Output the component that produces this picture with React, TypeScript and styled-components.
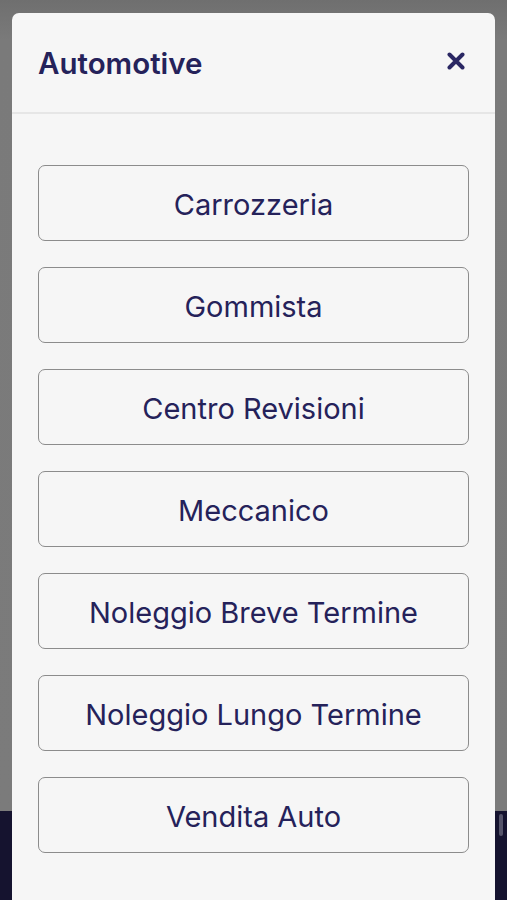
import styled, { createGlobalStyle } from "styled-components";

const GlobalStyle = createGlobalStyle`
  html, body {
    margin: 0;
    padding: 0;
    background: #7a7a7a;
  }
  * {
    box-sizing: border-box;
  }
`;

const categories = [
  "Carrozzeria",
  "Gommista",
  "Centro Revisioni",
  "Meccanico",
  "Noleggio Breve Termine",
  "Noleggio Lungo Termine",
  "Vendita Auto",
];

const Screen = styled.div`
  position: relative;
  width: 507px;
  height: 900px;
  overflow: hidden;
  font-family: Inter, "Liberation Sans", Arial, sans-serif;
`;

// page behind the dimmed backdrop
const Behind = styled.div`
  display: flex;
  flex-direction: column;
  height: 100%;
`;

const Dimmed = styled.div`
  height: 811px;
  background: linear-gradient(#6f6f6f, #7a7a7a 40px, #7b7b7b);
`;

const Footer = styled.div`
  flex: 1;
  background: #15132f;
  display: flex;
  justify-content: flex-end;
  padding: 3px 4px 0 0;
`;

const ScrollThumb = styled.div`
  width: 4px;
  height: 22px;
  border-radius: 2px;
  background: #55546a;
`;

const Overlay = styled.div`
  position: absolute;
  inset: 0;
  padding: 13px 12px 0;
`;

const Modal = styled.div`
  height: 100%;
  background: #f6f6f6;
  border-radius: 7px 7px 0 0;
  display: flex;
  flex-direction: column;
`;

const Header = styled.div`
  height: 101px;
  flex-shrink: 0;
  display: flex;
  align-items: center;
  justify-content: space-between;
  padding: 0 28px 0 26px;
  border-bottom: 2px solid #e6e6e6;
`;

const Title = styled.h2`
  margin: 0;
  font-size: 29.5px;
  font-weight: 600;
  color: #25225a;
`;

const CloseButton = styled.button`
  border: none;
  background: none;
  padding: 0;
  width: 22px;
  height: 22px;
  display: flex;
  align-items: center;
  justify-content: center;
  margin-top: -4px;
  cursor: pointer;
`;

const List = styled.div`
  display: flex;
  flex-direction: column;
  gap: 26px;
  padding: 51px 26px 0;
`;

const Option = styled.button`
  height: 76px;
  width: 100%;
  flex-shrink: 0;
  border: 1.5px solid #8c8c8c;
  border-radius: 7px;
  background: #f6f6f6;
  color: #25225a;
  font-family: Inter, "Liberation Sans", Arial, sans-serif;
  font-size: 29px;
  font-weight: 400;
  cursor: pointer;
  padding: 2px 0 0;
`;

function App() {
  return (
    <Screen>
      <GlobalStyle />
      <Behind>
        <Dimmed />
        <Footer>
          <ScrollThumb />
        </Footer>
      </Behind>
      <Overlay>
        <Modal>
          <Header>
            <Title>Automotive</Title>
            <CloseButton aria-label="Chiudi">
              <svg width="18" height="18" viewBox="0 0 18 18">
                <path
                  d="M2.5 2.5 L15.5 15.5 M15.5 2.5 L2.5 15.5"
                  stroke="#2a2763"
                  strokeWidth="4"
                  strokeLinecap="round"
                />
              </svg>
            </CloseButton>
          </Header>
          <List>
            {categories.map((c) => (
              <Option key={c}>{c}</Option>
            ))}
          </List>
        </Modal>
      </Overlay>
    </Screen>
  );
}

export default App;
